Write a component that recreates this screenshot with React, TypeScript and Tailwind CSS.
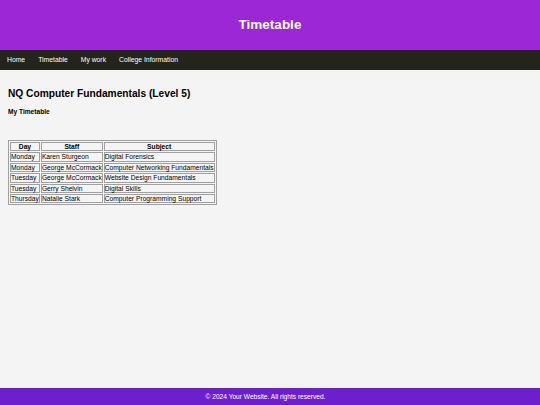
const rows = [
  ["Monday", "Karen Sturgeon", "Digital Forensics"],
  ["Monday", "George McCormack", "Computer Networking Fundamentals"],
  ["Tuesday", "George McCormack", "Website Design Fundamentals"],
  ["Tuesday", "Gerry Shelvin", "Digital Skills"],
  ["Thursday", "Natalie Stark", "Computer Programming Support"],
];

const cell = "border border-[#a0a0a0] px-0 py-0 leading-[7.4px]";

export default function App() {
  return (
    <div className="flex h-[405px] flex-col bg-[#f4f4f4] font-['Liberation_Sans',Arial,sans-serif] text-black">
      <header className="flex h-[50px] items-center justify-center bg-[#9b27d6]">
        <h1 className="text-[13.5px] font-bold text-white">Timetable</h1>
      </header>

      <nav className="flex h-[20px] items-center gap-[13px] bg-[#23241b] px-[7px] text-[6.8px] text-white">
        <a>Home</a>
        <a>Timetable</a>
        <a>My work</a>
        <a>College Information</a>
      </nav>

      <main className="flex-1 px-[8px]">
        <h2 className="mt-[18px] text-[10.2px] font-bold leading-[12px]">NQ Computer Fundamentals (Level 5)</h2>
        <h3 className="mt-[8px] text-[6.6px] font-bold leading-[8px]">My Timetable</h3>

        <table className="mt-[24px] border border-[#a0a0a0] border-separate border-spacing-[1px] text-[6.7px]">
          <thead>
            <tr>
              <th className={cell}>Day</th>
              <th className={cell}>Staff</th>
              <th className={cell}>Subject</th>
            </tr>
          </thead>
          <tbody>
            {rows.map((r, i) => (
              <tr key={i}>
                {r.map((c, j) => (
                  <td key={j} className={`${cell} text-left`}>
                    {c}
                  </td>
                ))}
              </tr>
            ))}
          </tbody>
        </table>
      </main>

      <footer className="flex h-[17px] items-center justify-center bg-[#6e1fcc] pr-[9px] text-[6.6px] text-white">
        © 2024 Your Website. All rights reserved.
      </footer>
    </div>
  );
}
